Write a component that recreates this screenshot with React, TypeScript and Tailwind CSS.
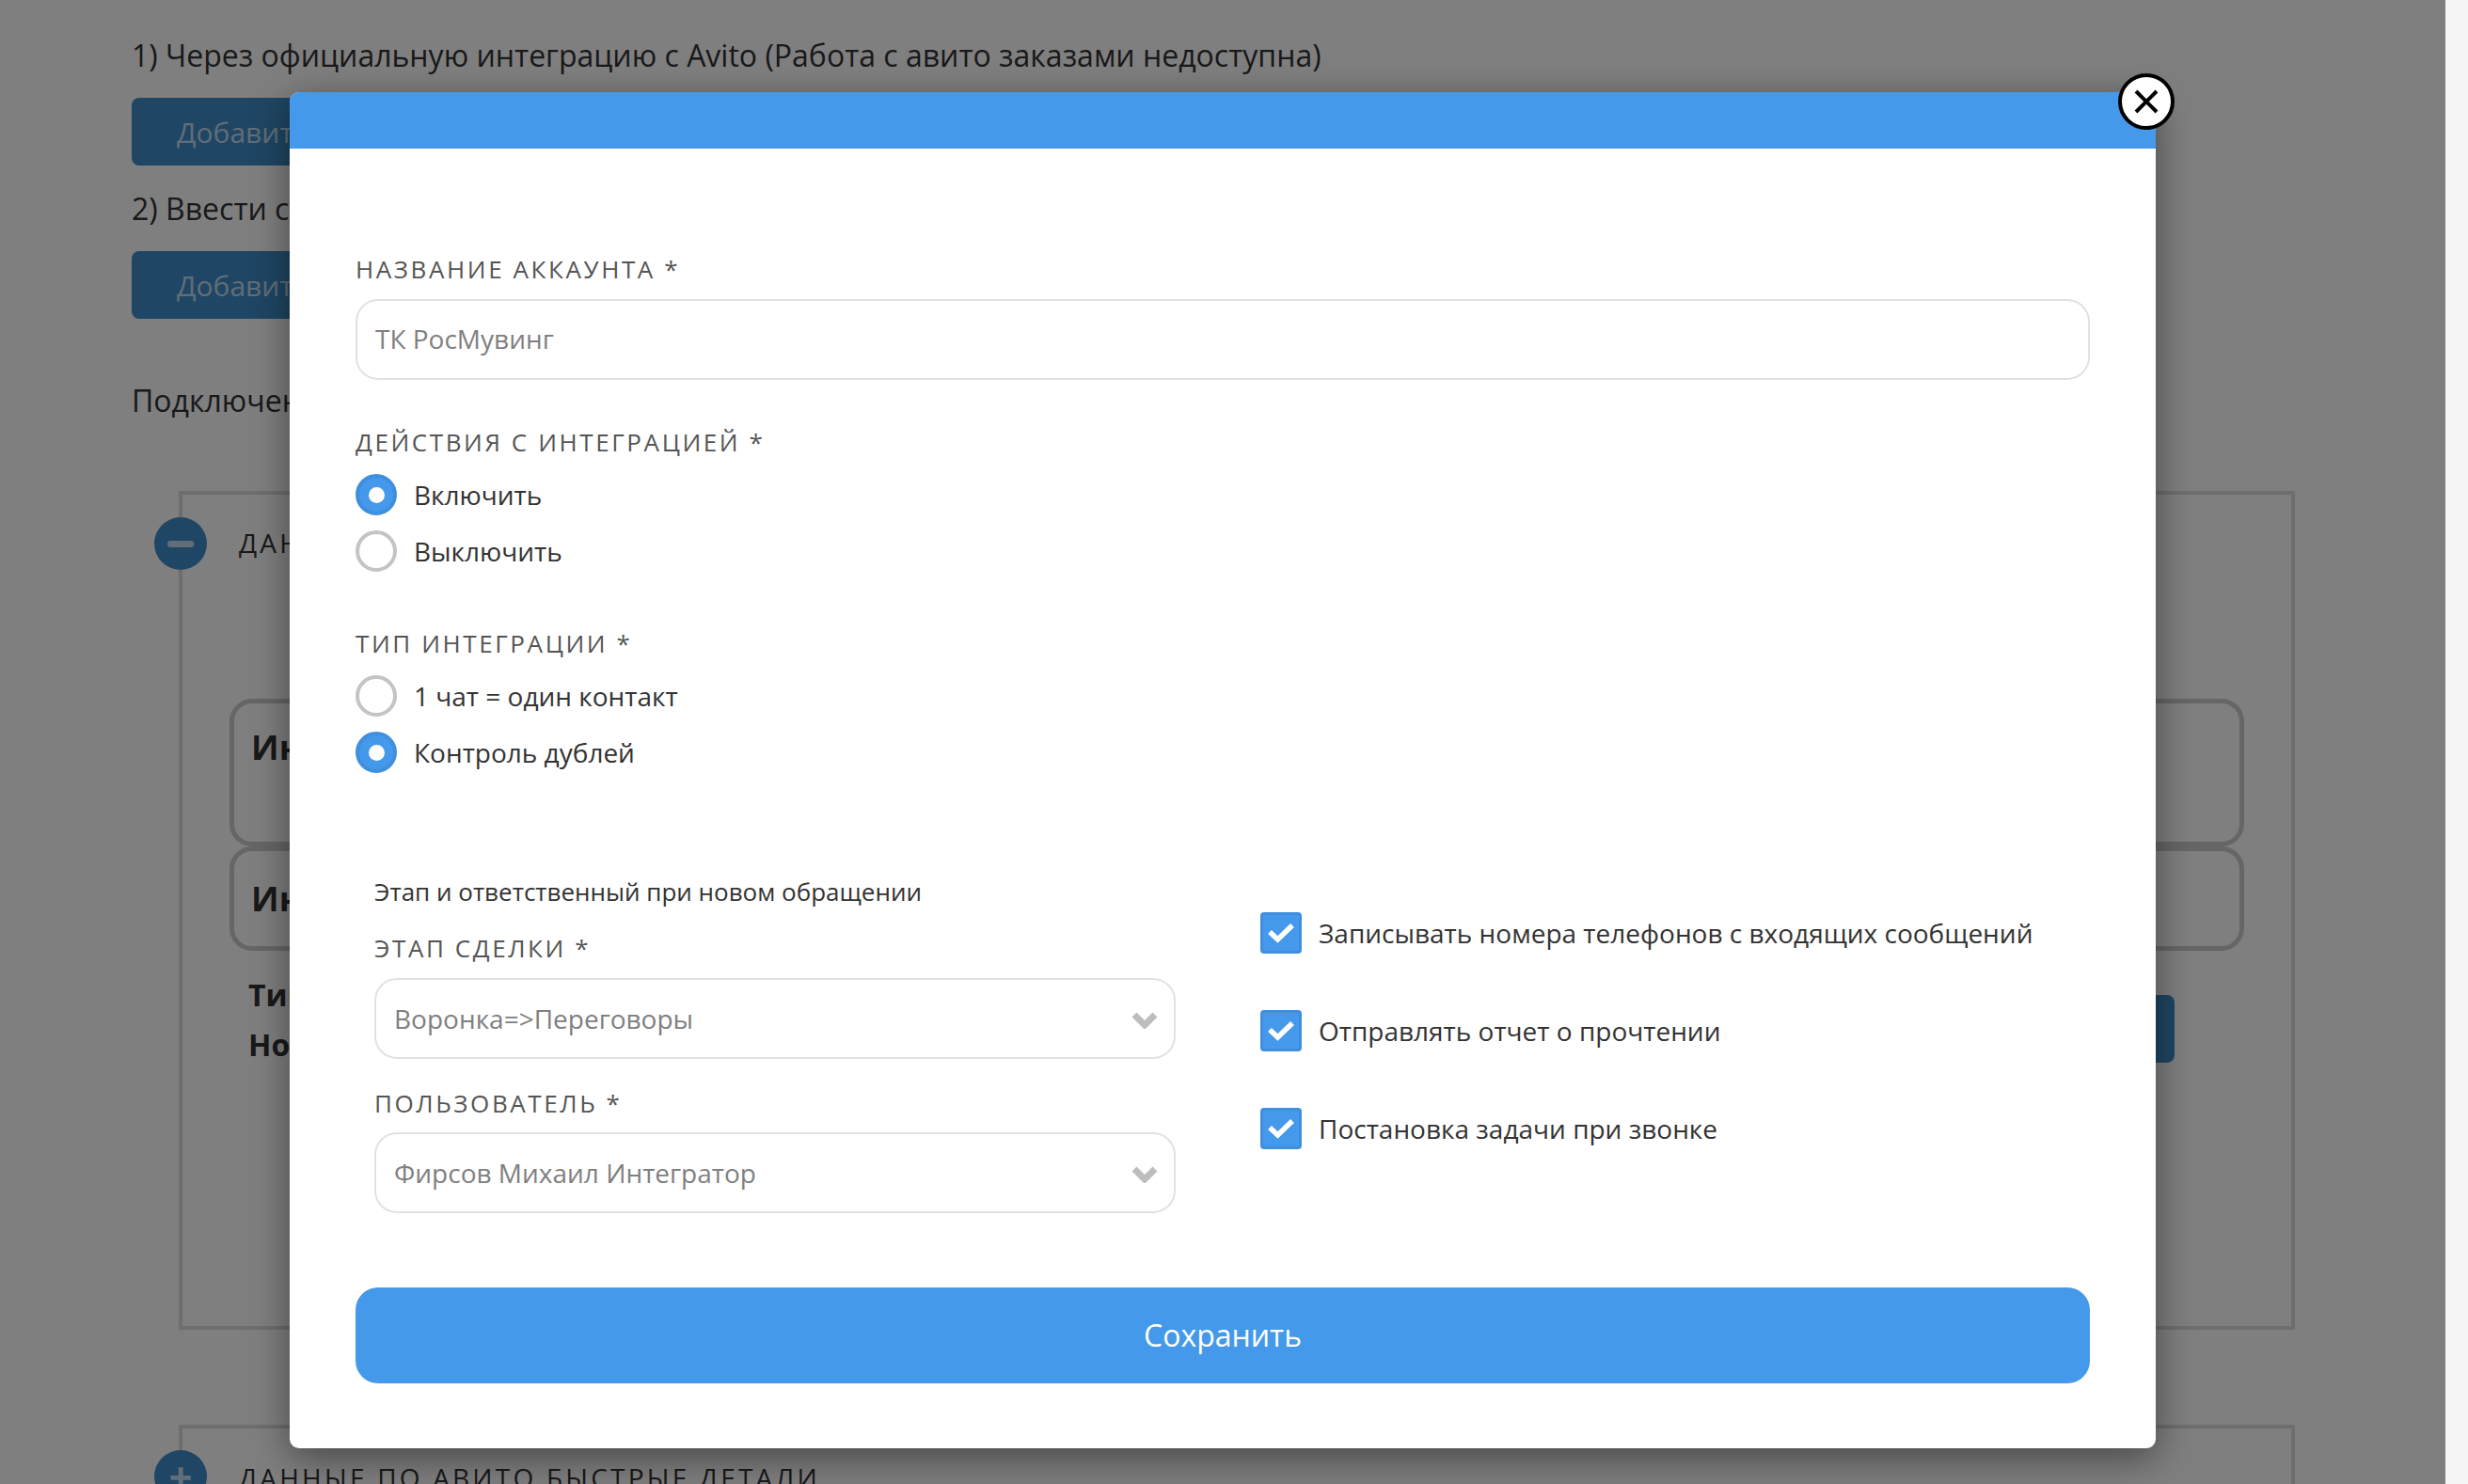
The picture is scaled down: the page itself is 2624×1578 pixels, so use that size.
import React from 'react';

const font = { fontFamily: '"Open Sans", sans-serif' };

const FieldLabel: React.FC<{ text: string }> = ({ text }) => (
  <div className="text-[26px] leading-[38px] tracking-[2.6px] uppercase text-[#555555]">{text} *</div>
);

const Radio: React.FC<{ label: string; checked?: boolean }> = ({ label, checked }) => (
  <div className="flex items-center h-[60px]">
    {checked ? (
      <span className="w-[44px] h-[44px] rounded-full bg-[#4499ea] border-[4px] border-[#3f8fde] flex items-center justify-center">
        <span className="w-[17px] h-[17px] rounded-full bg-white"></span>
      </span>
    ) : (
      <span className="w-[44px] h-[44px] rounded-full bg-white border-[4px] border-[#c4c4c4]"></span>
    )}
    <span className="ml-[18px] text-[28px] text-[#333333]">{label}</span>
  </div>
);

const Check: React.FC<{ label: string }> = ({ label }) => (
  <div className="flex items-center h-[44px]">
    <span className="w-[44px] h-[44px] rounded-[4px] bg-[#4499ea] border-[3px] border-[#3f8fde] flex items-center justify-center">
      <svg viewBox="0 0 28 22" className="w-[28px] h-[22px]">
        <path d="M2 10 L10.5 18 L26 3" fill="none" stroke="#ffffff" strokeWidth="5.5" />
      </svg>
    </span>
    <span className="ml-[18px] text-[28px] text-[#333333]">{label}</span>
  </div>
);

const Select: React.FC<{ value: string }> = ({ value }) => (
  <div className="h-[86px] rounded-[24px] border-[2px] border-[#e2e2e2] flex items-center justify-between pl-[19px] pr-[17px] text-[28px] text-[#808080]">
    <span>{value}</span>
    <svg viewBox="0 0 28 20" className="w-[28px] h-[20px] mt-[2px]">
      <path d="M3 5 L14 16 L25 5" fill="none" stroke="#bdbdbd" strokeWidth="7" />
    </svg>
  </div>
);

const App: React.FC = () => {
  return (
    <div style={font} className="w-[2624px] h-[1578px] overflow-hidden flex bg-[#f5f5f5]">
      <div className="relative w-[2600px] h-full bg-white overflow-hidden">
        {/* page behind the overlay */}
        <div className="pl-[140px] pt-[36px] text-[32px] text-[#333333] pr-[160px]">
          <div className="leading-[46px]">1) Через официальную интеграцию с Avito (Работа с авито заказами недоступна)</div>
          <div className="mt-[22px] w-[360px] h-[72px] rounded-[8px] bg-[#3e8cc9] text-white/70 flex items-center pl-[48px] text-[30px]">Добавить аккаунт</div>
          <div className="mt-[23px] leading-[46px]">2) Ввести сообщения</div>
          <div className="mt-[22px] w-[360px] h-[72px] rounded-[8px] bg-[#3e8cc9] text-white/70 flex items-center pl-[48px] text-[30px]">Добавить аккаунт</div>
          <div className="mt-[64px] leading-[46px]">Подключенные аккаунты</div>
        </div>
        <div className="mt-[73px] ml-[190px] w-[2250px] h-[892px] border-[4px] border-[#dcdcdc] relative">
          <span className="absolute left-[-30px] top-[24px] w-[56px] h-[56px] rounded-full bg-[#3e8cc9] flex items-center justify-center">
            <span className="w-[28px] h-[7px] rounded-[3px] bg-white/70"></span>
          </span>
          <div className="pl-[60px] pt-[30px] text-[28px] tracking-[3.2px] text-[#333333]">ДАННЫЕ ПО АВИТО</div>
          <div className="mt-[145px] ml-[50px] w-[2142px] flex flex-col">
            <div className="h-[157px] rounded-[24px] border-[5px] border-[#cccccc] pl-[18px] pt-[20px] text-[36px] font-bold text-[#333333]">Интеграция</div>
            <div className="h-[111px] rounded-[24px] border-[5px] border-[#cccccc] pl-[18px] pt-[24px] text-[36px] font-bold text-[#333333]">Интеграция</div>
          </div>
          <div className="mt-[20px] ml-[70px] flex justify-between pr-[124px]">
            <div className="text-[32px] font-bold text-[#333333] leading-[53px]">
              <div>Тип</div>
              <div>Номер</div>
            </div>
            <div className="mt-[27px] w-[300px] h-[72px] rounded-[8px] bg-[#3e8cc9]"></div>
          </div>
        </div>
        <div className="mt-[101px] ml-[190px] w-[2250px] h-[120px] border-[4px] border-[#dcdcdc] relative">
          <span className="absolute left-[-30px] top-[23px] w-[56px] h-[56px] rounded-full bg-[#3e8cc9] flex items-center justify-center text-white/70 text-[44px] font-bold leading-none">+</span>
          <div className="pl-[60px] pt-[31px] text-[28px] tracking-[3.2px] text-[#333333]">ДАННЫЕ ПО АВИТО БЫСТРЫЕ ДЕТАЛИ</div>
        </div>

        {/* overlay */}
        <div className="absolute inset-0 bg-black/50"></div>

        {/* modal */}
        <div className="absolute left-[308px] top-[98px] w-[1984px] h-[1442px] bg-white rounded-[10px] shadow-[0_10px_40px_rgba(0,0,0,0.45)]">
          <div className="h-[60px] bg-[#4499ea] rounded-t-[10px]"></div>
          <span className="absolute left-[1944px] top-[-20px] w-[60px] h-[60px] rounded-full bg-white border-[4px] border-black flex items-center justify-center">
            <svg viewBox="0 0 26 26" className="w-[26px] h-[26px]">
              <path d="M2 2 L24 24 M24 2 L2 24" stroke="#000000" strokeWidth="4" fill="none" />
            </svg>
          </span>
          <div className="px-[70px] pt-[109px]">
            <FieldLabel text="Название аккаунта" />
            <div className="mt-[13px] h-[86px] rounded-[24px] border-[2px] border-[#e2e2e2] flex items-center pl-[19px] pb-[2px] text-[28px] text-[#808080]">ТК РосМувинг</div>
            <div className="mt-[47px]">
              <FieldLabel text="Действия с интеграцией" />
              <div className="mt-[7px]">
                <Radio label="Включить" checked />
                <Radio label="Выключить" />
              </div>
            </div>
            <div className="mt-[49px]">
              <FieldLabel text="Тип интеграции" />
              <div className="mt-[7px]">
                <Radio label="1 чат = один контакт" />
                <Radio label="Контроль дублей" checked />
              </div>
            </div>
            <div className="mt-[100px] flex">
              <div className="ml-[20px] w-[852px]">
                <div className="text-[26px] leading-[36px] text-[#333333]">Этап и ответственный при новом обращении</div>
                <div className="mt-[23px]">
                  <FieldLabel text="Этап сделки" />
                </div>
                <div className="mt-[13px]">
                  <Select value="Воронка=>Переговоры" />
                </div>
                <div className="mt-[28px]">
                  <FieldLabel text="Пользователь" />
                </div>
                <div className="mt-[12px]">
                  <Select value="Фирсов Михаил Интегратор" />
                </div>
              </div>
              <div className="ml-[90px] pt-[40px] flex flex-col gap-[60px]">
                <Check label="Записывать номера телефонов с входящих сообщений" />
                <Check label="Отправлять отчет о прочтении" />
                <Check label="Постановка задачи при звонке" />
              </div>
            </div>
            <div className="mt-[79px] h-[102px] rounded-[24px] bg-[#4499ea] flex items-center justify-center text-[32px] text-white">Сохранить</div>
          </div>
        </div>
      </div>
      <div className="w-[24px] h-full bg-[#f5f5f5]"></div>
    </div>
  );
};

export default App;
